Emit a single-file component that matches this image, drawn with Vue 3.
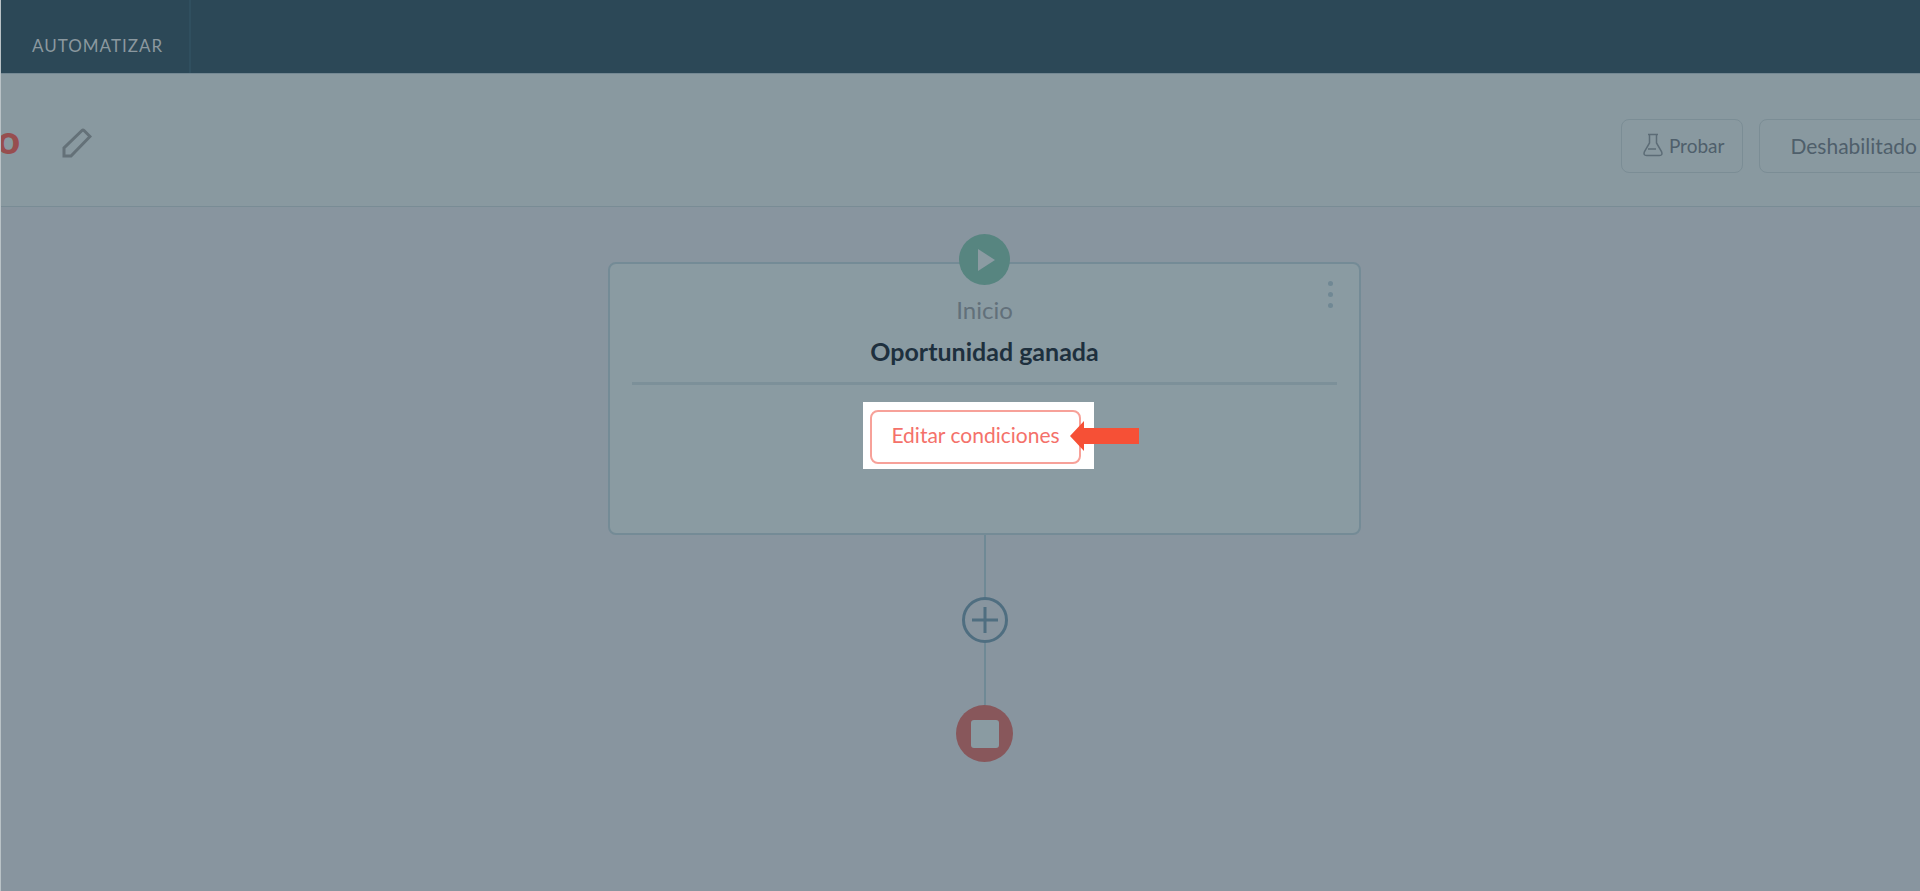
<script setup>
import { ref } from "vue";

const enabled = ref(false);
const title = ref("Oportunidad ganada");
</script>

<template>
  <div class="page">
    <nav class="topbar">
      <a href="#" class="tab">AUTOMATIZAR</a>
    </nav>

    <header class="header">
      <h1 class="name">o</h1>
      <button class="icon-button" aria-label="Editar nombre">
        <svg width="30" height="30" viewBox="0 0 30 30">
          <path
            d="M2 28V20L20 2.500Q21 1.500 22 2.500L28 8.500L9 28Z"
            fill="none"
            stroke="#647178"
            stroke-width="3"
          />
        </svg>
      </button>
      <div class="actions">
        <button class="button test">
          <svg width="20" height="24" viewBox="0 0 20 24">
            <path
              d="M5 1.500H15M6.500 2V10L1.500 18.500Q0 22.500 3.500 22.500H16.500Q20 22.500 18.500 18.500L13.500 10V2M5 16H13"
              fill="none"
              stroke="#5c6c76"
              stroke-width="1.500"
            />
          </svg>
          Probar
        </button>
        <button class="button status" @click="enabled = !enabled">
          {{ enabled ? "Habilitado" : "Deshabilitado" }}
        </button>
      </div>
    </header>

    <main class="canvas">
      <section class="card">
        <div class="start">
          <svg width="51" height="51" viewBox="0 0 51 51">
            <circle cx="25.500" cy="25.500" r="25.500" fill="#578580" />
            <path d="M19 15V37L36 26Z" fill="#8b9ba2" />
          </svg>
        </div>
        <button class="menu" aria-label="Opciones">
          <i></i>
          <i></i>
          <i></i>
        </button>
        <p class="step">Inicio</p>
        <h2 class="title">{{ title }}</h2>
        <hr class="rule" />
        <div class="spotlight">
          <button class="edit">Editar condiciones</button>
          <svg class="arrow" width="69" height="30" viewBox="0 0 69 30">
            <path d="M0 15L14 0V7H69V23H14V30Z" fill="#f65036" />
          </svg>
        </div>
      </section>

      <div class="line"></div>
      <button class="add" aria-label="Agregar paso">
        <svg width="46" height="46" viewBox="0 0 46 46">
          <circle cx="23" cy="23" r="21.500" fill="none" stroke="#4f6e80" stroke-width="3" />
          <path d="M10 23H36M23 10V36" stroke="#4f6e80" stroke-width="3" />
        </svg>
      </button>
      <div class="line"></div>
      <svg class="stop" width="57" height="57" viewBox="0 0 57 57">
        <circle cx="28.500" cy="28.500" r="28.500" fill="#88575b" />
        <rect x="15" y="15" width="28" height="28" rx="3" fill="#8a9ba2" />
      </svg>
    </main>
  </div>
</template>

<style>
body {
  background: #88959f;
}
</style>

<style scoped>
.page {
  min-height: 100vh;
  box-sizing: border-box;
  border-left: 1px solid #b9c2c6;
  overflow: hidden;
  font-family: Lato, "Liberation Sans", sans-serif;
  color: #4f5f6b;
}

button {
  font-family: inherit;
  color: inherit;
  background: none;
  border: none;
  padding: 0;
  cursor: pointer;
}

.topbar {
  display: flex;
  height: 73px;
  background: #2c4857;
}

.tab {
  display: flex;
  align-items: flex-end;
  padding: 0 26px 17px 31px;
  border-right: 2px solid #304f5f;
  color: #8b989f;
  font-size: 17px;
  line-height: 20px;
  letter-spacing: 1px;
  text-decoration: none;
}

.header {
  display: flex;
  align-items: center;
  height: 134px;
  background: #8999a0;
  border-top: 1px solid #748893;
  border-bottom: 1px solid #798c95;
  box-sizing: border-box;
}

.name {
  margin: 0 0 2px -4px;
  font-size: 40px;
  line-height: 48px;
  font-weight: 900;
  color: #974e4f;
}

.icon-button {
  display: flex;
  margin-top: 6px;
  margin-left: 42px;
}

.actions {
  display: flex;
  gap: 16px;
  margin-left: auto;
  margin-top: 12px;
  margin-right: -28px;
}

.button {
  display: flex;
  align-items: center;
  height: 54px;
  padding-bottom: 2px;
  border: 1px solid #7b8d95;
  border-radius: 8px;
  box-sizing: border-box;
  white-space: nowrap;
}

.test {
  gap: 6px;
  padding-left: 21px;
  padding-right: 18px;
  font-size: 19px;
}

.status {
  padding-left: 30px;
  padding-right: 30px;
  font-size: 21px;
}

.canvas {
  display: flex;
  flex-direction: column;
  align-items: center;
  padding: 55px 0 40px 48px;
}

.card {
  position: relative;
  display: flex;
  flex-direction: column;
  align-items: center;
  width: 40%;
  min-width: 753px;
  min-height: 273px;
  box-sizing: border-box;
  padding: 32px 22px;
  background: #8a9ba2;
  border: 2px solid #748b96;
  border-radius: 8px;
}

.start {
  position: absolute;
  top: -30px;
  left: calc(50% - 26px);
  height: 51px;
}

.menu {
  position: absolute;
  top: 17px;
  right: 26px;
  display: flex;
  flex-direction: column;
  gap: 6px;
}

.menu i {
  width: 5px;
  height: 5px;
  border-radius: 50%;
  background: #708894;
}

.step {
  margin: 0;
  font-size: 24px;
  line-height: 28px;
  color: #62707a;
}

.title {
  margin: 13px 0 17px;
  font-size: 25px;
  line-height: 28px;
  color: #1e303e;
}

.rule {
  width: 100%;
  height: 3px;
  margin: 0;
  border: none;
  background: #7c9099;
}

.spotlight {
  position: relative;
  margin-top: 17px;
  margin-right: 12px;
  padding: 8px 13px 5px 7px;
  background: #fff;
}

.edit {
  height: 54px;
  padding: 0 19px 6px;
  border: 2px solid #f7a199;
  border-radius: 8px;
  font-size: 21px;
  color: #f4716a;
  white-space: nowrap;
}

.arrow {
  position: absolute;
  top: 19px;
  left: 207px;
}

.line {
  width: 2px;
  height: 62px;
  background: #6f8995;
}

.add {
  display: flex;
}
</style>
